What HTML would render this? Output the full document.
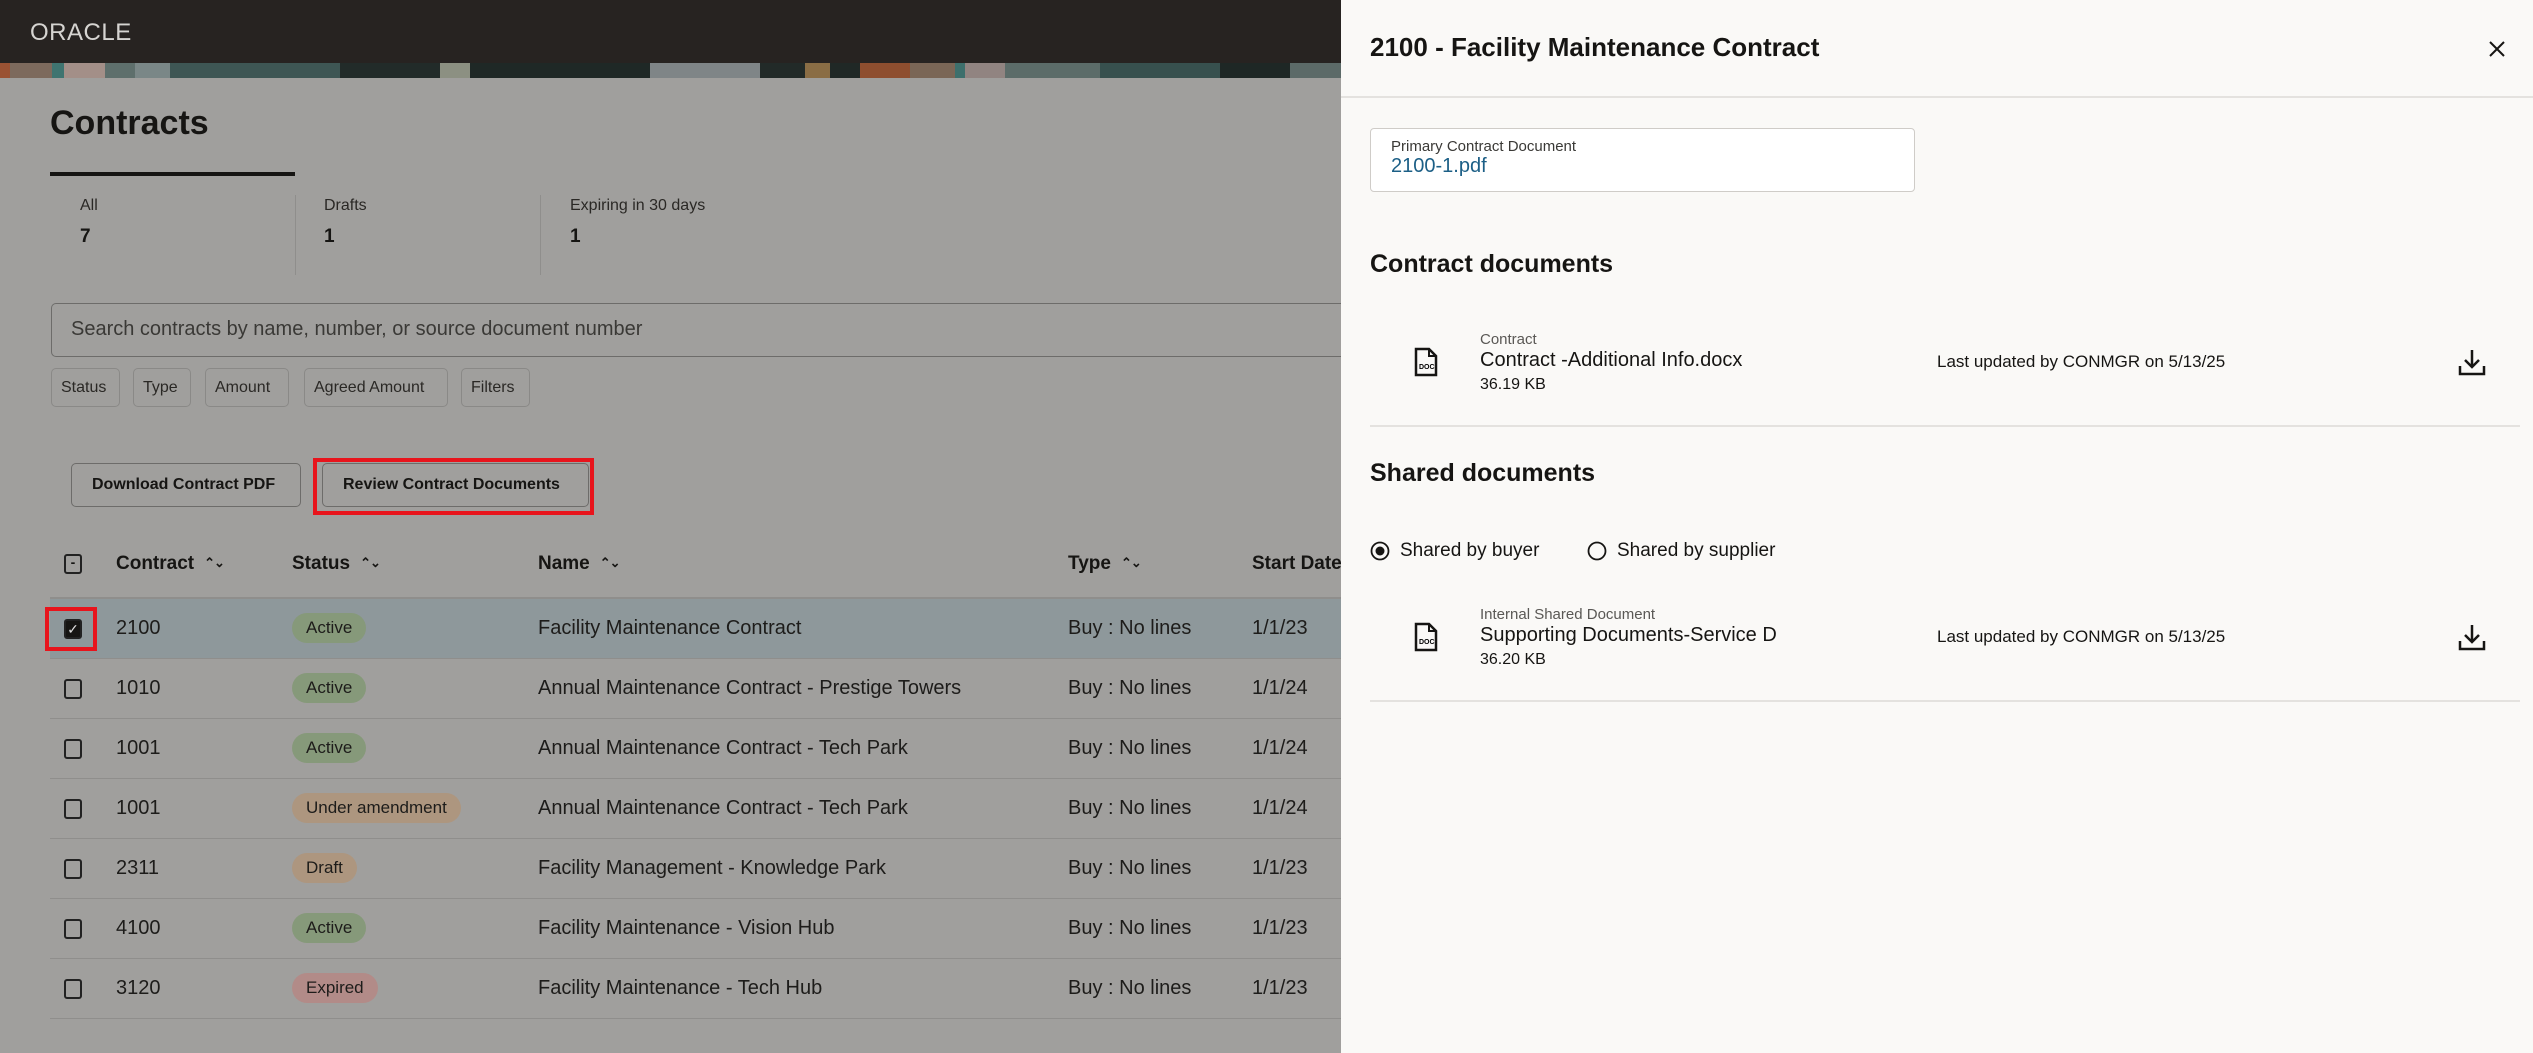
<!DOCTYPE html>
<html><head><meta charset="utf-8"><style>
*{margin:0;padding:0;box-sizing:border-box}
body{width:2533px;height:1053px;overflow:hidden;background:#a09f9d;font-family:"Liberation Sans",sans-serif;color:#161513;position:relative}
.a{position:absolute;white-space:nowrap}
.hdr{left:0;top:0;width:1341px;height:63px;background:#272321}
.ban{left:0;top:63px;width:1341px;height:15px;background:linear-gradient(90deg,#9a5233 0,#9a5233 10px,#7d6a5d 10px,#7d6a5d 52px,#3f7470 52px,#3f7470 64px,#a38f88 64px,#a38f88 105px,#5e6f6c 105px,#5e6f6c 135px,#7a8787 135px,#7a8787 170px,#3e5654 170px,#3e5654 340px,#222b29 340px,#222b29 440px,#8c9082 440px,#8c9082 470px,#1f2826 470px,#1f2826 650px,#7f8587 650px,#7f8587 760px,#222a28 760px,#222a28 805px,#8a6d45 805px,#8a6d45 830px,#202826 830px,#202826 860px,#8e4e2f 860px,#8e4e2f 910px,#7a6656 910px,#7a6656 955px,#3d6f6c 955px,#3d6f6c 965px,#918481 965px,#918481 1005px,#5c6c69 1005px,#5c6c69 1100px,#37504e 1100px,#37504e 1220px,#1e2725 1220px,#1e2725 1290px,#5c6a68 1290px)}
.ttl{left:50px;top:104px;font-size:34px;font-weight:bold}
.tab{left:50px;top:172px;width:245px;height:4px;background:#161513}
.sl{font-size:16px;color:#2a2825}
.sn{font-size:19px;font-weight:bold}
.vd{width:1px;height:80px;top:195px;background:#8f8e8c}
.search{left:51px;top:303px;width:1300px;height:54px;border:1.5px solid #6d6c6a;border-right:none;border-radius:5px 0 0 5px;font-size:20px;color:#3a3936;padding:0 19px;line-height:51px}
.chip{top:368px;height:39px;border:1px solid #8a8987;border-radius:5px;font-size:16px;padding:0 9px;line-height:37px;color:#2a2825}
.btn{top:463px;height:44px;border:1.5px solid #6d6c6a;border-radius:5px;font-size:16px;font-weight:bold;padding:0 20px;line-height:41px;color:#161513}
.red{border:4px solid #e8141c}
.th{top:553px;font-size:19px;font-weight:bold}
.sort{display:inline-block;margin-left:10px;font-size:13px;vertical-align:2px;letter-spacing:-1px}
.row{left:50px;width:1291px;height:60px;border-bottom:1.5px solid #8f8e8c}
.cb{width:18px;height:20px;border:2px solid #222;border-radius:3px}
.td{font-size:20px;color:#1d1c1a}
.pill{font-size:17px;border-radius:15px;padding:0 14px;height:30px;line-height:30px;color:#1d1c1a}
.pn{left:1341px;top:0;width:1192px;height:1053px;background:#faf9f7}
.pt{font-size:26px;font-weight:bold;left:1370px;top:32px}
.hl{height:1.5px;background:#e4e2df}
.box{left:1370px;top:128px;width:545px;height:64px;border:1px solid #cfccc8;border-radius:4px;background:#fff}
.h2{font-size:25px;font-weight:bold;left:1370px}
.lab{font-size:15px;color:#5a5855}
.nm{font-size:20px}
.sz{font-size:16px}
.lu{font-size:17px;left:1937px}
</style></head><body>
<div class="a hdr"></div>
<div class="a" style="left:30px;top:19px;color:#d6d4d1;font-size:24px;letter-spacing:0.5px">ORACLE</div>
<div class="a ban"></div>
<div class="a ttl">Contracts</div>
<div class="a tab"></div>
<div class="a sl" style="left:80px;top:197px">All</div>
<div class="a sn" style="left:80px;top:226px">7</div>
<div class="a vd" style="left:295px"></div>
<div class="a sl" style="left:324px;top:197px">Drafts</div>
<div class="a sn" style="left:324px;top:226px">1</div>
<div class="a vd" style="left:540px"></div>
<div class="a sl" style="left:570px;top:197px">Expiring in 30 days</div>
<div class="a sn" style="left:570px;top:226px">1</div>
<div class="a search">Search contracts by name, number, or source document number</div>
<div class="a chip" style="left:51px;width:69px">Status</div>
<div class="a chip" style="left:133px;width:58px">Type</div>
<div class="a chip" style="left:205px;width:84px">Amount</div>
<div class="a chip" style="left:304px;width:144px">Agreed Amount</div>
<div class="a chip" style="left:461px;width:69px">Filters</div>
<div class="a btn" style="left:71px;width:230px">Download Contract PDF</div>
<div class="a btn" style="left:322px;width:267px">Review Contract Documents</div>
<div class="a red" style="left:313px;top:458px;width:281px;height:57px"></div>

<div class="a cb" style="left:64px;top:554px;font-size:14px;line-height:13px;text-align:center;font-weight:bold">-</div>
<div class="a th" style="left:116px">Contract<span class="sort">⌃⌄</span></div>
<div class="a th" style="left:292px">Status<span class="sort">⌃⌄</span></div>
<div class="a th" style="left:538px">Name<span class="sort">⌃⌄</span></div>
<div class="a th" style="left:1068px">Type<span class="sort">⌃⌄</span></div>
<div class="a th" style="left:1252px">Start Date</div>
<div class="a" style="left:50px;top:597px;width:1291px;height:1.5px;background:#8f8e8c"></div>
<div class="a" style="left:50px;top:599px;width:1291px;height:59px;background:#8e989b"></div>

<div class="a row" style="top:599px"></div>
<div class="a row" style="top:659px"></div>
<div class="a row" style="top:719px"></div>
<div class="a row" style="top:779px"></div>
<div class="a row" style="top:839px"></div>
<div class="a row" style="top:899px"></div>
<div class="a row" style="top:959px"></div>

<div class="a cb" style="left:64px;top:619px;background:#161513;color:#ddd;font-size:14px;text-align:center;line-height:16px">✓</div>
<div class="a red" style="left:45px;top:607px;width:52px;height:44px"></div>
<div class="a td" style="left:116px;top:617px">2100</div>
<div class="a pill" style="left:292px;top:613px;background:#86997a">Active</div>
<div class="a td" style="left:538px;top:617px">Facility Maintenance Contract</div>
<div class="a td" style="left:1068px;top:617px">Buy : No lines</div>
<div class="a td" style="left:1252px;top:617px">1/1/23</div>

<div class="a cb" style="left:64px;top:679px"></div>
<div class="a td" style="left:116px;top:677px">1010</div>
<div class="a pill" style="left:292px;top:673px;background:#86997a">Active</div>
<div class="a td" style="left:538px;top:677px">Annual Maintenance Contract - Prestige Towers</div>
<div class="a td" style="left:1068px;top:677px">Buy : No lines</div>
<div class="a td" style="left:1252px;top:677px">1/1/24</div>

<div class="a cb" style="left:64px;top:739px"></div>
<div class="a td" style="left:116px;top:737px">1001</div>
<div class="a pill" style="left:292px;top:733px;background:#86997a">Active</div>
<div class="a td" style="left:538px;top:737px">Annual Maintenance Contract - Tech Park</div>
<div class="a td" style="left:1068px;top:737px">Buy : No lines</div>
<div class="a td" style="left:1252px;top:737px">1/1/24</div>

<div class="a cb" style="left:64px;top:799px"></div>
<div class="a td" style="left:116px;top:797px">1001</div>
<div class="a pill" style="left:292px;top:793px;background:#ad967f">Under amendment</div>
<div class="a td" style="left:538px;top:797px">Annual Maintenance Contract - Tech Park</div>
<div class="a td" style="left:1068px;top:797px">Buy : No lines</div>
<div class="a td" style="left:1252px;top:797px">1/1/24</div>

<div class="a cb" style="left:64px;top:859px"></div>
<div class="a td" style="left:116px;top:857px">2311</div>
<div class="a pill" style="left:292px;top:853px;background:#ad967f">Draft</div>
<div class="a td" style="left:538px;top:857px">Facility Management - Knowledge Park</div>
<div class="a td" style="left:1068px;top:857px">Buy : No lines</div>
<div class="a td" style="left:1252px;top:857px">1/1/23</div>

<div class="a cb" style="left:64px;top:919px"></div>
<div class="a td" style="left:116px;top:917px">4100</div>
<div class="a pill" style="left:292px;top:913px;background:#86997a">Active</div>
<div class="a td" style="left:538px;top:917px">Facility Maintenance - Vision Hub</div>
<div class="a td" style="left:1068px;top:917px">Buy : No lines</div>
<div class="a td" style="left:1252px;top:917px">1/1/23</div>

<div class="a cb" style="left:64px;top:979px"></div>
<div class="a td" style="left:116px;top:977px">3120</div>
<div class="a pill" style="left:292px;top:973px;background:#b28b88">Expired</div>
<div class="a td" style="left:538px;top:977px">Facility Maintenance - Tech Hub</div>
<div class="a td" style="left:1068px;top:977px">Buy : No lines</div>
<div class="a td" style="left:1252px;top:977px">1/1/23</div>

<div class="a pn"></div>
<div class="a pt">2100 - Facility Maintenance Contract</div>
<svg class="a" style="left:2488px;top:40px" width="18" height="18" viewBox="0 0 18 18"><path d="M2 2L16 16M16 2L2 16" stroke="#161513" stroke-width="2"/></svg>
<div class="a hl" style="left:1341px;top:96px;width:1192px"></div>
<div class="a box"></div>
<div class="a" style="left:1391px;top:138px;font-size:15px;color:#3a3936">Primary Contract Document</div>
<div class="a" style="left:1391px;top:155px;font-size:20px;color:#1c5f86">2100-1.pdf</div>
<div class="a h2" style="top:250px">Contract documents</div>

<svg class="a" style="left:1414px;top:347px" width="24" height="30" viewBox="0 0 24 30"><path d="M2 2H15L22 9V28H2Z" fill="none" stroke="#161513" stroke-width="2.5"/><path d="M15 2V9H22" fill="none" stroke="#161513" stroke-width="2"/><text x="5" y="22" font-size="7" font-weight="bold" font-family="Liberation Sans">DOC</text></svg>
<div class="a lab" style="left:1480px;top:331px">Contract</div>
<div class="a nm" style="left:1480px;top:349px">Contract -Additional Info.docx</div>
<div class="a sz" style="left:1480px;top:376px">36.19 KB</div>
<div class="a lu" style="top:352px">Last updated by CONMGR on 5/13/25</div>
<svg class="a" style="left:2458px;top:348px" width="28" height="28" viewBox="0 0 28 28"><path d="M14 2V19M7 12L14 19L21 12M2 18V26H26V18" fill="none" stroke="#161513" stroke-width="2.5"/></svg>
<div class="a hl" style="left:1370px;top:425px;width:1150px"></div>

<div class="a h2" style="top:459px">Shared documents</div>
<svg class="a" style="left:1370px;top:541px" width="20" height="20"><circle cx="10" cy="10" r="8.5" fill="none" stroke="#161513" stroke-width="1.8"/><circle cx="10" cy="10" r="4.5" fill="#161513"/></svg>
<div class="a" style="left:1400px;top:540px;font-size:19px">Shared by buyer</div>
<svg class="a" style="left:1587px;top:541px" width="20" height="20"><circle cx="10" cy="10" r="8.5" fill="none" stroke="#161513" stroke-width="1.8"/></svg>
<div class="a" style="left:1617px;top:540px;font-size:19px">Shared by supplier</div>

<svg class="a" style="left:1414px;top:622px" width="24" height="30" viewBox="0 0 24 30"><path d="M2 2H15L22 9V28H2Z" fill="none" stroke="#161513" stroke-width="2.5"/><path d="M15 2V9H22" fill="none" stroke="#161513" stroke-width="2"/><text x="5" y="22" font-size="7" font-weight="bold" font-family="Liberation Sans">DOC</text></svg>
<div class="a lab" style="left:1480px;top:606px">Internal Shared Document</div>
<div class="a nm" style="left:1480px;top:624px">Supporting Documents-Service D</div>
<div class="a sz" style="left:1480px;top:651px">36.20 KB</div>
<div class="a lu" style="top:627px">Last updated by CONMGR on 5/13/25</div>
<svg class="a" style="left:2458px;top:623px" width="28" height="28" viewBox="0 0 28 28"><path d="M14 2V19M7 12L14 19L21 12M2 18V26H26V18" fill="none" stroke="#161513" stroke-width="2.5"/></svg>
<div class="a hl" style="left:1370px;top:700px;width:1150px"></div>
</body></html>
